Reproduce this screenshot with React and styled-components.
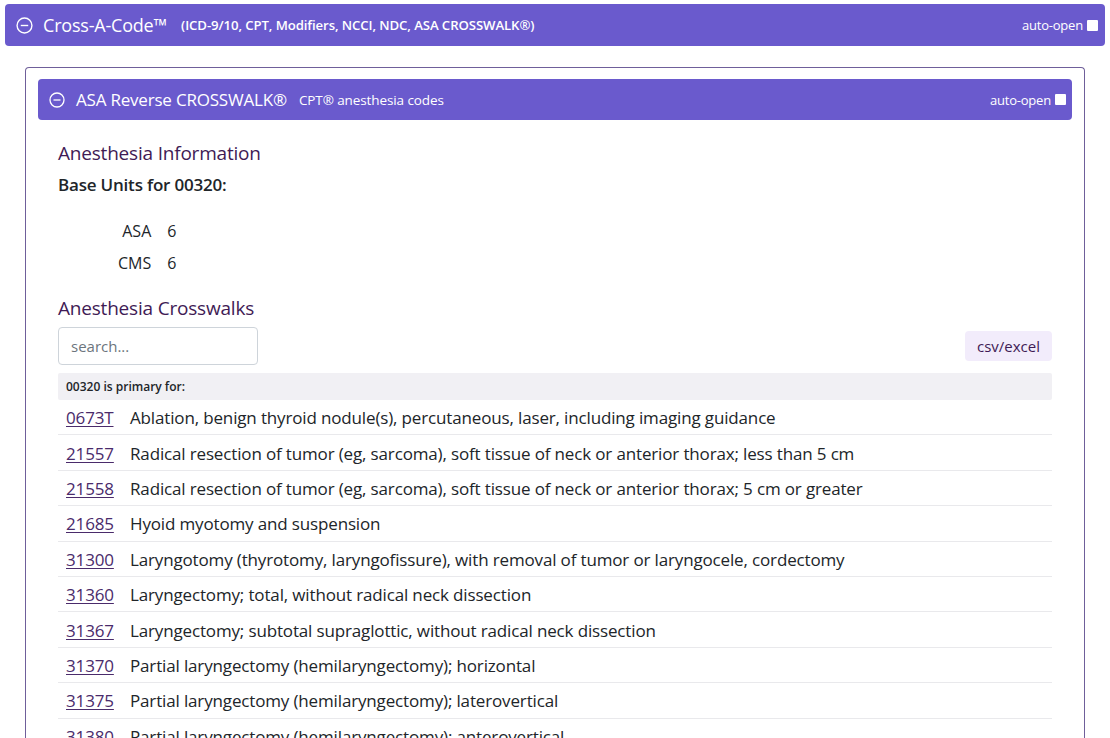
import React from 'react'
import styled, { createGlobalStyle } from 'styled-components'

const GlobalStyle = createGlobalStyle`
  body {
    margin: 0;
    background: #ffffff;
    font-family: "Open Sans", "Noto Sans", sans-serif;
    color: #212529;
  }
`

const Page = styled.div`
  padding: 4px 5px 0 5px;
  height: 738px;
  overflow: hidden;
  box-sizing: border-box;
`

const Bar = styled.div`
  display: flex;
  align-items: center;
  height: ${p => p.$h}px;
  padding: 0 ${p => p.$right}px 0 11px;
  background: #6a5acd;
  border-radius: 4px;
  color: #ffffff;
`

const Title = styled.span`
  font-size: ${p => p.$size}px;
  margin-left: ${p => p.$gap}px;
  letter-spacing: -0.2px;
`

const Sub = styled.span`
  font-size: ${p => (p.$bold ? 13.2 : 13.5)}px;
  font-weight: ${p => (p.$bold ? 600 : 500)};
  margin-left: ${p => p.$gap}px;
  letter-spacing: -0.1px;
`

const AutoOpen = styled.label`
  margin-left: auto;
  display: flex;
  align-items: center;
  gap: 4px;
  font-size: 13px;
  letter-spacing: -0.2px;
`

const Check = styled.span`
  width: 11px;
  height: 11px;
  background: #ffffff;
  border-radius: 1px;
`

const Card = styled.div`
  margin: 21px 20px 0 20px;
  border: 1px solid #6f5f9a;
  border-bottom: none;
  border-radius: 4px 4px 0 0;
  padding: 11px 12px 0 12px;
  height: 700px;
`

const Body = styled.div`
  padding: 20px 20px 0 20px;
`

const Heading = styled.h2`
  margin: 0;
  font-size: 19px;
  font-weight: 400;
  color: #3f1b55;
  letter-spacing: -0.2px;
`

const BaseLabel = styled.div`
  margin-top: 7px;
  font-size: 17px;
  font-weight: 600;
  color: #212529;
  letter-spacing: -0.2px;
`

const Units = styled.table`
  margin: 19px 0 16px 52px;
  border-collapse: collapse;
  font-size: 16px;
  color: #212529;
  td {
    padding: 4px 8px;
    height: 24px;
  }
  td:first-child {
    text-align: right;
  }
`

const Toolbar = styled.div`
  display: flex;
  justify-content: space-between;
  align-items: center;
  margin-top: 6px;
`

const Search = styled.input`
  width: 200px;
  height: 38px;
  box-sizing: border-box;
  border: 1px solid #ced4da;
  border-radius: 4px;
  padding: 0 12px;
  font-family: inherit;
  font-size: 15px;
  &::placeholder {
    color: #6c757d;
  }
`

const CsvButton = styled.button`
  background: #f2ecfb;
  border: none;
  border-radius: 4px;
  height: 30px;
  padding: 0 12px;
  font-family: inherit;
  font-size: 15px;
  color: #3f1b55;
`

const Table = styled.div`
  margin-top: 8px;
`

const TableHead = styled.div`
  background: #f1f0f4;
  height: 27px;
  display: flex;
  align-items: center;
  padding: 0 8px;
  font-size: 12px;
  font-weight: 600;
  border-radius: 2px;
`

const Row = styled.div`
  display: flex;
  align-items: center;
  height: 35.4px;
  box-sizing: border-box;
  border-bottom: 1px solid #e9e9ec;
  padding: 1px 8px 0 8px;
  font-size: 17px;
  letter-spacing: -0.15px;
  white-space: nowrap;
`

const Code = styled.a`
  width: 64px;
  flex: none;
  color: #4a2b6b;
  text-decoration: underline;
  text-underline-offset: 2px;
`

const Desc = styled.span`
  color: #212529;
`

const MinusCircle = ({ size }) => (
  <svg width={size} height={size} viewBox="0 0 16 16" fill="none" stroke="#fff" strokeWidth="1.3">
    <circle cx="8" cy="8" r="7" />
    <line x1="4.5" y1="8" x2="11.5" y2="8" />
  </svg>
)

const rows = [
  ['0673T', 'Ablation, benign thyroid nodule(s), percutaneous, laser, including imaging guidance'],
  ['21557', 'Radical resection of tumor (eg, sarcoma), soft tissue of neck or anterior thorax; less than 5 cm'],
  ['21558', 'Radical resection of tumor (eg, sarcoma), soft tissue of neck or anterior thorax; 5 cm or greater'],
  ['21685', 'Hyoid myotomy and suspension'],
  ['31300', 'Laryngotomy (thyrotomy, laryngofissure), with removal of tumor or laryngocele, cordectomy'],
  ['31360', 'Laryngectomy; total, without radical neck dissection'],
  ['31367', 'Laryngectomy; subtotal supraglottic, without radical neck dissection'],
  ['31370', 'Partial laryngectomy (hemilaryngectomy); horizontal'],
  ['31375', 'Partial laryngectomy (hemilaryngectomy); laterovertical'],
  ['31380', 'Partial laryngectomy (hemilaryngectomy); anterovertical'],
]

export default function App() {
  return (
    <Page>
      <GlobalStyle />
      <Bar $h={42} $right={7}>
        <MinusCircle size={17} />
        <Title $size={18} $gap={10}>Cross-A-Code™</Title>
        <Sub $bold $gap={14}>(ICD-9/10, CPT, Modifiers, NCCI, NDC, ASA CROSSWALK®)</Sub>
        <AutoOpen>auto-open <Check /></AutoOpen>
      </Bar>
      <Card>
        <Bar $h={41} $right={6}>
          <MinusCircle size={16} />
          <Title $size={17} $gap={11}>ASA Reverse CROSSWALK®</Title>
          <Sub $gap={12}>CPT® anesthesia codes</Sub>
          <AutoOpen>auto-open <Check /></AutoOpen>
        </Bar>
        <Body>
          <Heading>Anesthesia Information</Heading>
          <BaseLabel>Base Units for 00320:</BaseLabel>
          <Units>
            <tbody>
              <tr><td>ASA</td><td>6</td></tr>
              <tr><td>CMS</td><td>6</td></tr>
            </tbody>
          </Units>
          <Heading>Anesthesia Crosswalks</Heading>
          <Toolbar>
            <Search placeholder="search..." />
            <CsvButton>csv/excel</CsvButton>
          </Toolbar>
          <Table>
            <TableHead>00320 is primary for:</TableHead>
            {rows.map(([code, desc]) => (
              <Row key={code}>
                <Code href="#">{code}</Code>
                <Desc>{desc}</Desc>
              </Row>
            ))}
          </Table>
        </Body>
      </Card>
    </Page>
  )
}
